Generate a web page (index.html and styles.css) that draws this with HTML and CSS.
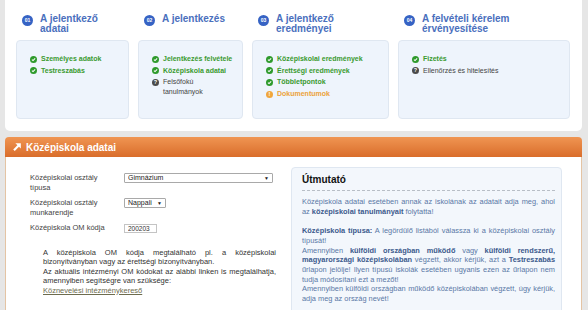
FILE: index.html
```html
<!DOCTYPE html>
<html lang="hu">
<head>
<meta charset="utf-8">
<title>Középiskola adatai</title>
<link rel="stylesheet" href="styles.css">
</head>
<body>
<div class="page">

  <div class="steps">
    <div class="step">
      <div class="step-head"><span class="num">01</span><h2>A jelentkező<br>adatai</h2></div>
      <ul class="step-box">
        <li class="done"><svg class="ico" viewBox="0 0 8 8"><circle cx="4" cy="4" r="4"/><path d="M2.2 4.1 3.5 5.3 5.9 2.8"/></svg>Személyes adatok</li>
        <li class="done"><svg class="ico" viewBox="0 0 8 8"><circle cx="4" cy="4" r="4"/><path d="M2.2 4.1 3.5 5.3 5.9 2.8"/></svg>Testreszabás</li>
      </ul>
    </div>
    <div class="step">
      <div class="step-head"><span class="num">02</span><h2>A jelentkezés</h2></div>
      <ul class="step-box">
        <li class="done"><svg class="ico" viewBox="0 0 8 8"><circle cx="4" cy="4" r="4"/><path d="M2.2 4.1 3.5 5.3 5.9 2.8"/></svg>Jelentkezés felvétele</li>
        <li class="done"><svg class="ico" viewBox="0 0 8 8"><circle cx="4" cy="4" r="4"/><path d="M2.2 4.1 3.5 5.3 5.9 2.8"/></svg>Középiskola adatai</li>
        <li class="open"><span class="ico mark">?</span>Felsőfokú<br>tanulmányok</li>
      </ul>
    </div>
    <div class="step">
      <div class="step-head"><span class="num">03</span><h2>A jelentkező<br>eredményei</h2></div>
      <ul class="step-box">
        <li class="done"><svg class="ico" viewBox="0 0 8 8"><circle cx="4" cy="4" r="4"/><path d="M2.2 4.1 3.5 5.3 5.9 2.8"/></svg>Középiskolai eredmények</li>
        <li class="done"><svg class="ico" viewBox="0 0 8 8"><circle cx="4" cy="4" r="4"/><path d="M2.2 4.1 3.5 5.3 5.9 2.8"/></svg>Érettségi eredmények</li>
        <li class="done"><svg class="ico" viewBox="0 0 8 8"><circle cx="4" cy="4" r="4"/><path d="M2.2 4.1 3.5 5.3 5.9 2.8"/></svg>Többletpontok</li>
        <li class="warn"><span class="ico mark">!</span>Dokumentumok</li>
      </ul>
    </div>
    <div class="step">
      <div class="step-head"><span class="num">04</span><h2>A felvételi kérelem<br>érvényesítése</h2></div>
      <ul class="step-box">
        <li class="done"><svg class="ico" viewBox="0 0 8 8"><circle cx="4" cy="4" r="4"/><path d="M2.2 4.1 3.5 5.3 5.9 2.8"/></svg>Fizetés</li>
        <li class="open"><span class="ico mark">?</span>Ellenőrzés és hitelesítés</li>
      </ul>
    </div>
  </div>

  <section class="panel">
    <h1 class="panel-head">
      <svg class="arrow" viewBox="0 0 10 10"><path d="M2 8.2 7.4 2.8"/><path class="tip" d="M3.4 1.2H8.8V6.6Z"/></svg>
      Középiskola adatai
    </h1>
    <div class="panel-body">
      <form class="school-form">
        <div class="field">
          <label>Középiskolai osztály típusa</label>
          <span class="select wide"><select><option>Gimnázium</option></select></span>
        </div>
        <div class="field">
          <label>Középiskolai osztály munkarendje</label>
          <span class="select narrow"><select><option>Nappali</option></select></span>
        </div>
        <div class="field">
          <label>Középiskola OM kódja</label>
          <input class="om" type="text" value="200203">
        </div>
        <p class="hint">A középiskola OM kódja megtalálható pl. a középiskolai bizonyítványban vagy az érettségi bizonyítványban.<br>Az aktuális intézményi OM kódokat az alábbi linken is megtalálhatja, amennyiben segítségre van szüksége:<br><a href="#">Köznevelési intézménykereső</a></p>
      </form>

      <aside class="guide">
        <h3>Útmutató</h3>
        <p>Középiskola adatai esetében annak az iskolának az adatait adja meg, ahol az <b>középiskolai tanulmányait</b> folytatta!<br><br><b>Középiskola típusa:</b> A legördülő listából válassza ki a középiskolai osztály típusát!<br>Amennyiben <b>külföldi országban működő</b> vagy <b>külföldi rendszerű, magyarországi középiskolában</b> végzett, akkor kérjük, azt a <b>Testreszabás</b> űrlapon jelölje! Ilyen típusú iskolák esetében ugyanis ezen az űrlapon nem tudja módosítani ezt a mezőt!<br>Amennyiben külföldi országban működő középiskolában végzett, úgy kérjük, adja meg az ország nevét!</p>
      </aside>
    </div>
  </section>

</div>
</body>
</html>
```

FILE: styles.css
```css
* { box-sizing: border-box; }

body {
  margin: 0;
  background: #e6e6e6;
  font-family: "Liberation Sans", Arial, sans-serif;
  color: #333;
}

.page {
  width: 577px;
  margin-left: 5px;
}

/* ---- progress steps ---- */
.steps {
  background: #fff;
  border-radius: 0 0 5px 5px;
  padding: 14px 12px 12px 11px;
  display: grid;
  grid-template-columns: 113px 105px 137px 172px;
  column-gap: 9px;
}

.step { display: flex; flex-direction: column; }

.step-head {
  height: 26px;
  display: flex;
  align-items: flex-start;
  padding-left: 6px;
}

.num {
  flex: none;
  width: 11px;
  height: 11px;
  margin-top: 1px;
  margin-right: 7px;
  border-radius: 50%;
  background: #3663c4;
  color: #fff;
  font-size: 5px;
  font-weight: bold;
  line-height: 11px;
  text-align: center;
}

.step-head h2 {
  margin: 0;
  font-size: 10px;
  line-height: 10px;
  font-weight: bold;
  color: #4a6fbd;
}

.step-box {
  list-style: none;
  margin: 0;
  height: 79px;
  padding: 13px 4px 0 13px;
  background: #eef4fc;
  border: 1px solid #dfe7f1;
  border-radius: 4px;
}

.step-box li {
  display: flex;
  align-items: flex-start;
  font-size: 7px;
  line-height: 10px;
  margin-bottom: 1.7px;
  white-space: nowrap;
}

.ico {
  flex: none;
  width: 7px;
  height: 7px;
  margin: 1.5px 4px 0 0;
}

svg.ico circle { fill: #2e9a2c; }
svg.ico path { fill: none; stroke: #fff; stroke-width: 1.2; }

.mark {
  border-radius: 50%;
  color: #fff;
  font-size: 5.5px;
  font-weight: bold;
  line-height: 7px;
  text-align: center;
}

.done { color: #3a9a30; font-weight: bold; }
.open { color: #444; }
.open .mark { background: #4a4a4a; }
.warn { color: #eca23a; font-weight: bold; }
.warn .mark { background: #f0a63c; }

/* ---- school data panel ---- */
.panel { margin-top: 6px; }

.panel-head {
  margin: 0;
  height: 20px;
  display: flex;
  align-items: center;
  padding-left: 7px;
  border-radius: 4px 4px 0 0;
  background: linear-gradient(#f09552, #d96d2b);
  color: #fff;
  font-size: 10px;
  font-weight: bold;
}

.arrow {
  width: 10px;
  height: 10px;
  margin-right: 4px;
}
.arrow path { fill: none; stroke: #fff; stroke-width: 2.2; }
.arrow path.tip { fill: #fff; stroke: none; }

.panel-body {
  display: flex;
  align-items: flex-start;
  background: #fff;
  border-left: 1px solid #e4c4a4;
  border-right: 1px solid #e4c4a4;
  padding: 10px 19px 0 24px;
  height: 153px;
}

.school-form {
  width: 246px;
  margin-top: 6px;
  margin-right: 15px;
  font-size: 7.5px;
  line-height: 9.5px;
}

.field {
  display: flex;
  align-items: flex-start;
  margin-bottom: 6px;
}

.field label {
  width: 94px;
  padding-right: 12px;
  color: #444;
}

.select {
  position: relative;
  display: block;
  height: 10px;
}
.select.wide { width: 149px; }
.select.narrow { width: 42px; }

.select select {
  appearance: none;
  -webkit-appearance: none;
  display: block;
  width: 100%;
  height: 10px;
  margin: 0;
  padding: 0 0 0 3px;
  border: 1px solid #a9a9a9;
  border-radius: 1px;
  background: #fff;
  font-family: inherit;
  font-size: 7px;
  line-height: 8px;
  color: #222;
}

.select::after {
  content: "▼";
  position: absolute;
  right: 4px;
  top: 0;
  font-size: 5px;
  line-height: 10px;
  color: #222;
  pointer-events: none;
}

.om {
  display: block;
  width: 33px;
  height: 9px;
  margin: 1px 0 0;
  padding: 0 0 0 3px;
  border: 1px solid #c4c4c4;
  font-family: inherit;
  font-size: 6.5px;
  color: #333;
}

.hint {
  margin: 15px 0 0 13px;
  text-align: justify;
  line-height: 9.4px;
  color: #333;
}

.hint a {
  color: #6d6c4e;
  text-decoration: underline;
}

.guide {
  width: 271px;
  height: 160px;
  padding: 6px 6px 0 10px;
  background: #f3f7fc;
  border: 1px solid #dfe7f1;
  border-radius: 4px;
}

.guide h3 {
  margin: 0;
  padding-bottom: 4px;
  border-bottom: 1px dashed #b8bec6;
  font-size: 10px;
  line-height: 12px;
  color: #111;
}

.guide p {
  margin: 6px 0 0;
  font-size: 7.4px;
  line-height: 9.7px;
  text-align: justify;
  color: #5a78a6;
}

.guide b { color: #3c5a8c; }
```
